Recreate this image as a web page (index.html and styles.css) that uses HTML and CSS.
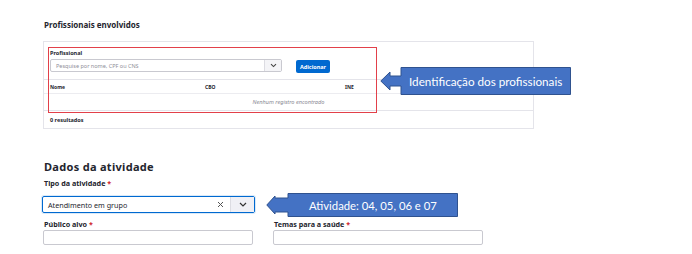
FILE: index.html
```html
<!DOCTYPE html>
<html lang="pt-BR">
<head>
<meta charset="utf-8">
<link rel="stylesheet" href="styles.css">
</head>
<body>
<div class="page">
  <h2 class="sec-title">Profissionais envolvidos</h2>
  <div class="card">
    <div class="form-area">
      <div class="field">
        <label class="lbl">Profissional</label>
        <div class="combo">
          <span class="placeholder">Pesquise por nome, CPF ou CNS</span>
          <span class="combo-btn">
            <svg width="7" height="5" viewBox="0 0 7 5"><path d="M1 1.2 L3.5 3.6 L6 1.2" fill="none" stroke="#444" stroke-width="1.1"/></svg>
          </span>
        </div>
      </div>
      <button class="btn">Adicionar</button>
    </div>
    <div class="table">
      <div class="thead">
        <span class="c-nome">Nome</span>
        <span class="c-cbo">CBO</span>
        <span class="c-ine">INE</span>
      </div>
      <div class="empty">Nenhum registro encontrado</div>
      <div class="tfoot">0 resultados</div>
    </div>
  </div>

  <h2 class="sec-title big">Dados da atividade</h2>
  <div class="field tipo">
    <label class="lbl">Tipo da atividade <span class="req">*</span></label>
    <div class="select">
      <span class="value">Atendimento em grupo</span>
      <span class="clear">
        <svg width="7" height="7" viewBox="0 0 7 7"><path d="M1 1 L6 6 M6 1 L1 6" stroke="#555" stroke-width="1"/></svg>
      </span>
      <span class="select-btn">
        <svg width="8" height="5" viewBox="0 0 8 5"><path d="M1 1 L4 4 L7 1" fill="none" stroke="#333" stroke-width="1.2"/></svg>
      </span>
    </div>
  </div>
  <div class="row2">
    <div class="field">
      <label class="lbl">Público alvo <span class="req">*</span></label>
      <div class="input"></div>
    </div>
    <div class="field">
      <label class="lbl">Temas para a saúde <span class="req">*</span></label>
      <div class="input"></div>
    </div>
  </div>
</div>

<div class="redbox"></div>

<div class="callout callout1">
  <svg class="arrow" width="192" height="30" viewBox="0 0 192 30">
    <polygon points="21,0.5 190.5,0.5 190.5,27.5 21,27.5 21,19 10,19 10,23 0.8,14 10,5 10,9 21,9" fill="#4472c4" stroke="#2f528f" stroke-width="1"/>
  </svg>
  <span class="ctext">Identificação dos profissionais</span>
</div>

<div class="callout callout2">
  <svg class="arrow" width="193" height="25" viewBox="0 0 193 25">
    <polygon points="22,0.5 191.5,0.5 191.5,23.5 22,23.5 22,19 9,19 9,21 0.8,12 9,3 9,5 22,5" fill="#4472c4" stroke="#2f528f" stroke-width="1"/>
  </svg>
  <span class="ctext">Atividade: 04, 05, 06 e 07</span>
</div>
</body>
</html>
```

FILE: styles.css
```css
* { box-sizing: border-box; }
html, body { margin: 0; padding: 0; background: #fff; }
body {
  font-family: "Noto Sans", "Liberation Sans", sans-serif;
  color: #24252e;
  position: relative;
  width: 692px;
  height: 254px;
  overflow: hidden;
}
.page {
  padding: 19px 0 0 43px;
  width: 534px;
}
.sec-title {
  margin: 0;
  font-size: 8px;
  line-height: 12px;
  font-weight: 700;
  padding-left: 1px;
}
.sec-title.big {
  font-size: 11px;
  line-height: 14px;
  margin-top: 31px;
  letter-spacing: 0.3px;
}
.card {
  margin-top: 10px;
  border: 1px solid #e4e4ea;
  width: 491px;
}
.form-area {
  display: flex;
  align-items: flex-end;
  gap: 14px;
  padding: 7px 0 7px 6px;
}
.field { display: flex; flex-direction: column; }
.lbl {
  font-size: 5.5px;
  line-height: 8px;
  font-weight: 700;
  color: #24252e;
}
.req { color: #d01e2c; }
.combo {
  margin-top: 2px;
  width: 232px;
  height: 13px;
  border: 1px solid #c9c9d0;
  border-radius: 2px;
  display: flex;
  align-items: center;
  justify-content: space-between;
}
.placeholder {
  font-size: 5.5px;
  color: #8f8f99;
  padding-left: 5px;
}
.combo-btn {
  width: 17px;
  height: 100%;
  border-left: 1px solid #dcdce2;
  background: #f4f4f7;
  display: flex;
  align-items: center;
  justify-content: center;
}
.btn {
  margin-bottom: -1px;
  border: 0;
  border-radius: 2px;
  background: #0069d0;
  color: #fff;
  font-family: inherit;
  font-size: 5.5px;
  font-weight: 700;
  height: 13px;
  width: 34px;
  padding: 0;
}
.table { border-top: 1px solid #e4e4ea; }
.thead {
  height: 14px;
  display: flex;
  align-items: center;
  font-size: 5px;
  font-weight: 700;
  border-bottom: 1px solid #ececf0;
  padding-left: 6px;
}
.c-nome { width: 155px; }
.c-cbo { width: 140px; }
.empty {
  height: 17px;
  font-size: 5.6px;
  font-style: italic;
  color: #8a8a94;
  display: flex;
  align-items: center;
  justify-content: center;
  border-bottom: 1px solid #e4e4ea;
}
.tfoot {
  height: 17px;
  display: flex;
  align-items: center;
  padding-left: 6px;
  font-size: 5.5px;
  font-weight: 700;
}
.tipo { margin-top: 4px; }
.tipo .lbl { font-size: 7.2px; line-height: 10px; padding-left: 1px; }
.select {
  margin-top: 8px;
  margin-left: -1px;
  width: 213px;
  height: 17px;
  border: 1.5px solid #0069d0;
  border-radius: 2px;
  display: flex;
  align-items: center;
  box-shadow: 0 0 0 1px rgba(0,105,208,0.15);
}
.value {
  flex: 1;
  font-size: 7.2px;
  padding-left: 5px;
  color: #24252e;
}
.clear {
  width: 14px;
  display: flex;
  justify-content: center;
  margin-right: 3px;
}
.select-btn {
  width: 24px;
  height: 100%;
  background: #f0f0f5;
  border-left: 1px solid #dcdce2;
  display: flex;
  align-items: center;
  justify-content: center;
}
.row2 {
  margin-top: 6px;
  display: flex;
  gap: 20px;
}
.row2 .lbl { font-size: 7.2px; line-height: 10px; padding-left: 1px; }
.input {
  margin-top: 1px;
  width: 210px;
  height: 15px;
  border: 1px solid #c9c9d0;
  border-radius: 2px;
}

/* annotations over the screenshot */
.redbox {
  position: absolute;
  left: 48px;
  top: 47px;
  width: 329px;
  height: 66px;
  border: 1px solid #e2404a;
}
.callout {
  position: absolute;
  display: flex;
  align-items: center;
}
.callout .arrow { position: absolute; left: 0; top: 0; }
.ctext {
  position: relative;
  font-family: "Lato", "Open Sans", sans-serif;
  color: #fff;
  white-space: nowrap;
}
.callout1 {
  left: 380px;
  top: 67px;
  width: 192px;
  height: 28px;
}
.callout1 .ctext { font-size: 11.7px; margin-left: 29px; }
.callout2 {
  left: 266px;
  top: 193px;
  width: 193px;
  height: 24px;
}
.callout2 .ctext { font-size: 11.3px; margin-left: 43px; }
```
